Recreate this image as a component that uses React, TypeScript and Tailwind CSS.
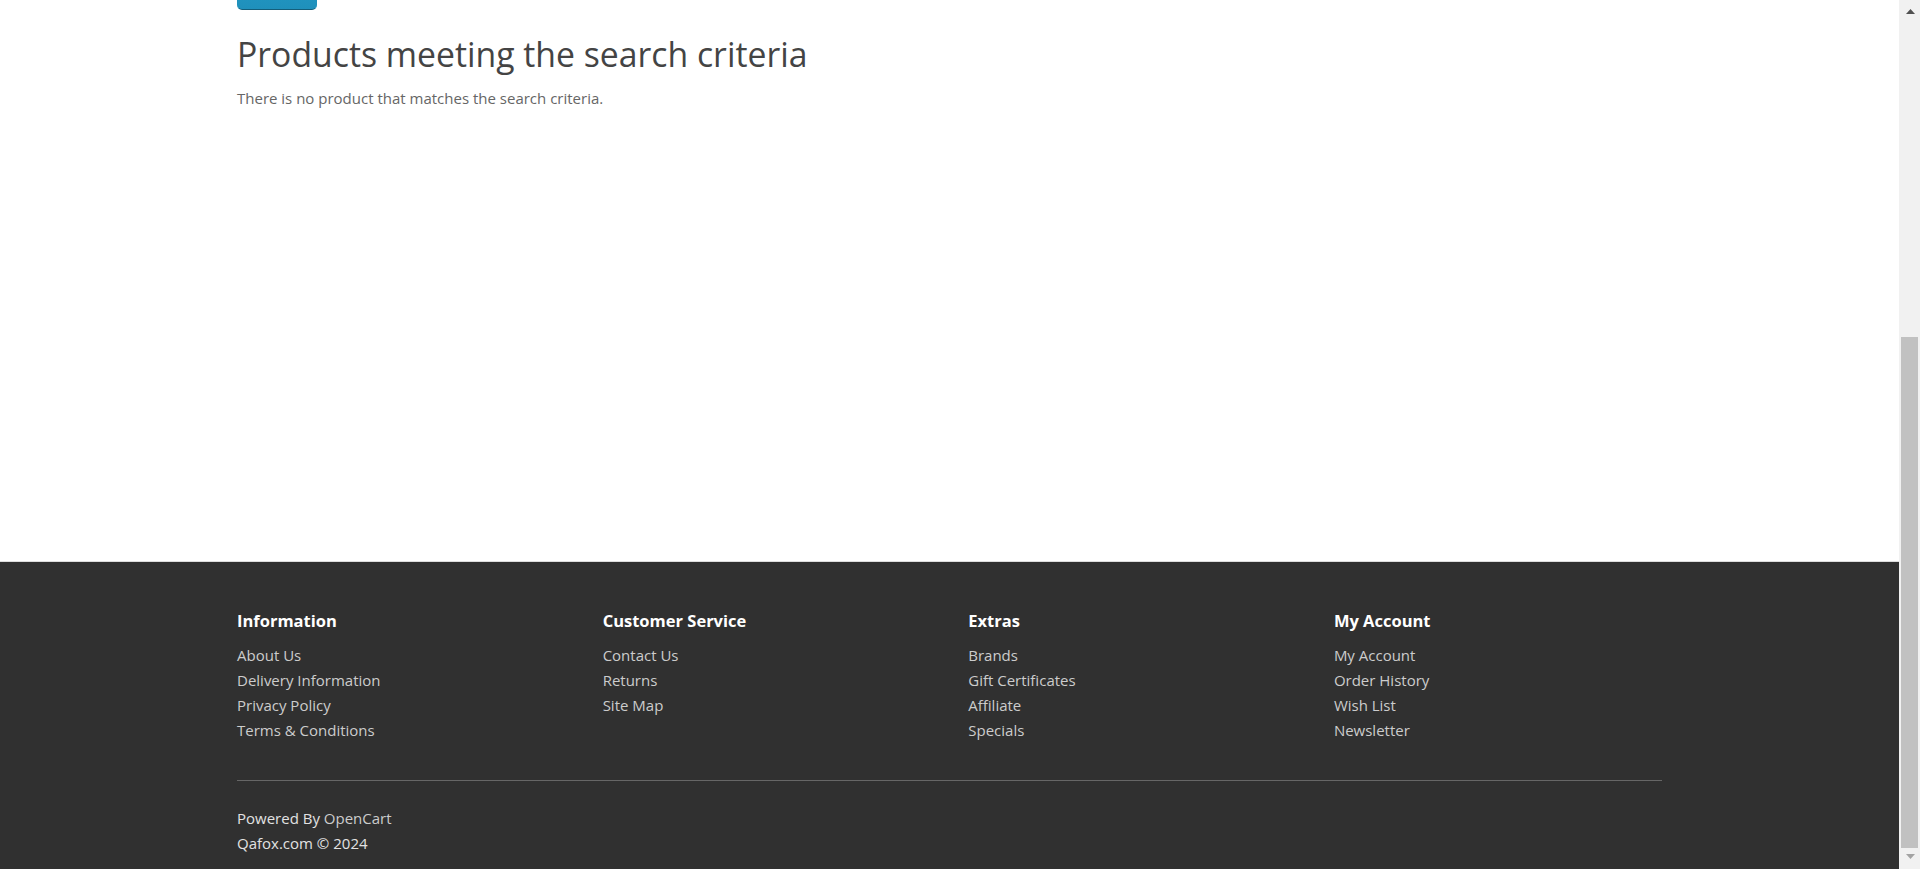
import React from "react";

const footerColumns: { title: string; links: string[] }[] = [
  { title: "Information", links: ["About Us", "Delivery Information", "Privacy Policy", "Terms & Conditions"] },
  { title: "Customer Service", links: ["Contact Us", "Returns", "Site Map"] },
  { title: "Extras", links: ["Brands", "Gift Certificates", "Affiliate", "Specials"] },
  { title: "My Account", links: ["My Account", "Order History", "Wish List", "Newsletter"] },
];

// Classic browser scrollbar, parked at the bottom of the page.
function Scrollbar() {
  return (
    <div className="flex h-full w-[21px] shrink-0 flex-col bg-[#f1f1f1]">
      <div className="flex h-[23px] shrink-0 justify-center pt-[9px] pl-[1px]">
        <svg width="9" height="5" viewBox="0 0 9 5">
          <polygon points="4.5,0 9,5 0,5" fill="#505050" />
        </svg>
      </div>
      <div className="h-[314px] shrink-0" />
      <div className="mx-[2px] h-[511px] shrink-0 bg-[#c1c1c1]" />
      <div className="flex h-[21px] shrink-0 justify-center pt-[6px] pl-[1px]">
        <svg width="9" height="5" viewBox="0 0 9 5">
          <polygon points="0,0 9,0 4.5,5" fill="#a3a3a3" />
        </svg>
      </div>
    </div>
  );
}

export default function App() {
  return (
    <div
      className="flex h-[869px] w-full overflow-hidden bg-white text-[15px] text-[#666]"
      style={{ fontFamily: '"Open Sans", "Noto Sans", sans-serif' }}
    >
      <div className="flex min-w-0 flex-1 flex-col">
        <div className="h-[561px] shrink-0">
          <div className="mx-auto flex w-[1425px] flex-col">
            {/* search button from the form above — only its bottom edge is in view */}
            <button
              aria-label="Search"
              className="-mt-[33px] h-[43px] w-[80px] rounded-[5px] border border-[#1f90bb] border-b-[#145e7a] bg-gradient-to-b from-[#229ac8] to-[#1f90bb]"
            />
            <h2 className="mt-[26px] mb-[12.5px] text-[33.75px] leading-[1.1] font-normal text-[#444]">
              Products meeting the search criteria
            </h2>
            <p className="leading-[25px]">There is no product that matches the search criteria.</p>
          </div>
        </div>

        <footer className="flex-1 border-t border-[#ddd] bg-[#303030] pt-[37.5px] text-[#e2e2e2]">
          <div className="mx-auto w-[1425px]">
            <div className="grid grid-cols-4 gap-x-[37.5px]">
              {footerColumns.map((col) => (
                <div key={col.title}>
                  <h5 className="mt-[12.5px] mb-[12.5px] text-[16.5px] leading-[18px] font-bold text-white">
                    {col.title}
                  </h5>
                  <ul className="mb-[12px]">
                    {col.links.map((l) => (
                      <li key={l} className="leading-[25px]">
                        <a className="text-[#ccc]">{l}</a>
                      </li>
                    ))}
                  </ul>
                </div>
              ))}
            </div>
            <hr className="mt-[25px] mb-[25px] border-0 border-b border-[#666]" />
            <p className="leading-[25px]">
              Powered By <a className="text-[#ccc]">OpenCart</a>
              <br />
              Qafox.com © 2024
            </p>
          </div>
        </footer>
      </div>
      <Scrollbar />
    </div>
  );
}
